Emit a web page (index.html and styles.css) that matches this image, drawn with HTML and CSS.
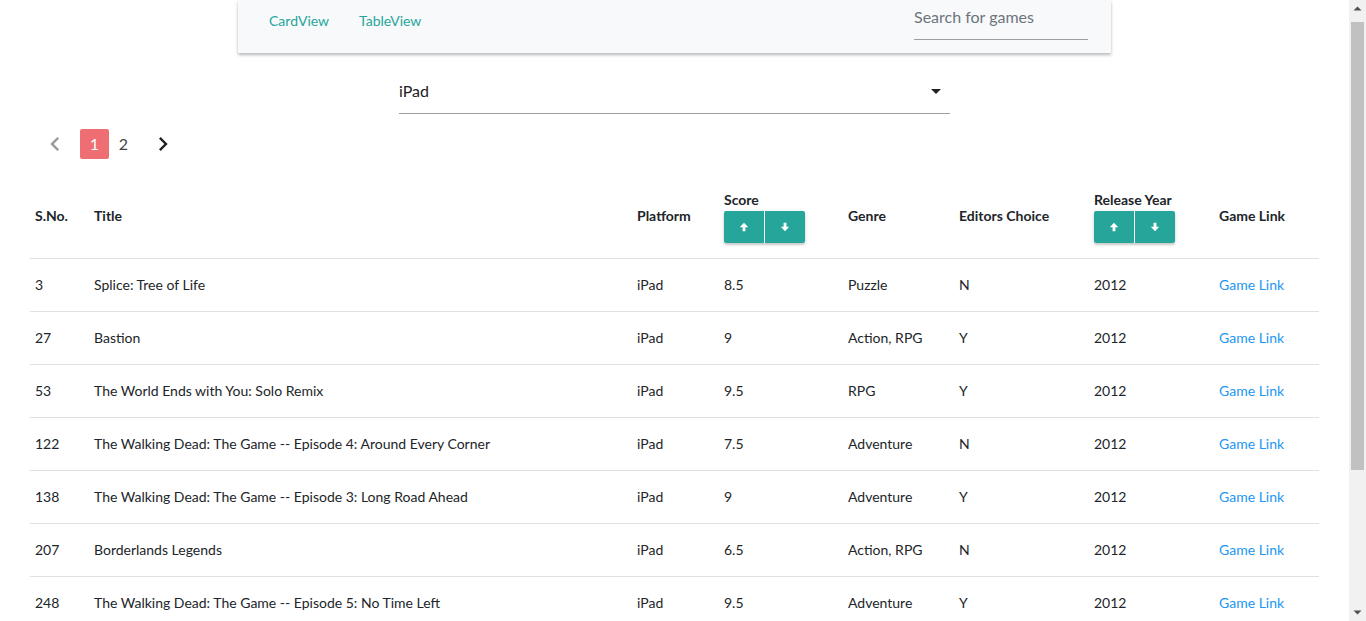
FILE: index.html
```html
<!DOCTYPE html>
<html lang="en">
<head>
<meta charset="utf-8">
<title>Games</title>
<link rel="stylesheet" href="styles.css">
</head>
<body>
<div class="page">
  <nav class="navbar">
    <div class="nav-links">
      <a class="nav-link" href="#">CardView</a>
      <a class="nav-link" href="#">TableView</a>
    </div>
    <div class="search">
      <input class="search-input" type="text" placeholder="Search for games">
    </div>
  </nav>

  <div class="select-wrap">
    <div class="select">
      <span class="select-value">iPad</span>
      <svg class="caret" viewBox="0 0 24 24" width="24" height="24"><path d="M7 10l5 5 5-5z" fill="#212121"/></svg>
    </div>
  </div>

  <ul class="pagination">
    <li class="pg-arrow disabled"><svg viewBox="0 0 24 24" width="28" height="28"><path d="M15.41 7.41L14 6l-6 6 6 6 1.41-1.41L10.83 12z"/></svg></li>
    <li class="pg-num active">1</li>
    <li class="pg-num">2</li>
    <li class="pg-arrow next"><svg viewBox="0 0 24 24" width="28" height="28"><path d="M10 6L8.59 7.41 13.17 12l-4.58 4.59L10 18l6-6z"/></svg></li>
  </ul>

  <table class="games">
    <colgroup>
      <col class="c-sno"><col class="c-title"><col class="c-platform"><col class="c-score"><col class="c-genre"><col class="c-editors"><col class="c-year"><col class="c-link">
    </colgroup>
    <thead>
      <tr>
        <th>S.No.</th>
        <th>Title</th>
        <th>Platform</th>
        <th>
          <div class="th-label">Score</div>
          <div class="sort-group">
            <button class="sort-btn"><svg viewBox="0 0 10 10" width="10" height="10"><path d="M5 0.8L9.2 5.2H6.4V9.2H3.6V5.2H0.8Z"/></svg></button>
            <button class="sort-btn"><svg viewBox="0 0 10 10" width="10" height="10"><path d="M5 9.2L9.2 4.8H6.4V0.8H3.6V4.8H0.8Z"/></svg></button>
          </div>
        </th>
        <th>Genre</th>
        <th>Editors Choice</th>
        <th>
          <div class="th-label">Release Year</div>
          <div class="sort-group">
            <button class="sort-btn"><svg viewBox="0 0 10 10" width="10" height="10"><path d="M5 0.8L9.2 5.2H6.4V9.2H3.6V5.2H0.8Z"/></svg></button>
            <button class="sort-btn"><svg viewBox="0 0 10 10" width="10" height="10"><path d="M5 9.2L9.2 4.8H6.4V0.8H3.6V4.8H0.8Z"/></svg></button>
          </div>
        </th>
        <th>Game Link</th>
      </tr>
    </thead>
    <tbody>
      <tr><td>3</td><td>Splice: Tree of Life</td><td>iPad</td><td>8.5</td><td>Puzzle</td><td>N</td><td>2012</td><td><a class="game-link" href="#">Game Link</a></td></tr>
      <tr><td>27</td><td>Bastion</td><td>iPad</td><td>9</td><td>Action, RPG</td><td>Y</td><td>2012</td><td><a class="game-link" href="#">Game Link</a></td></tr>
      <tr><td>53</td><td>The World Ends with You: Solo Remix</td><td>iPad</td><td>9.5</td><td>RPG</td><td>Y</td><td>2012</td><td><a class="game-link" href="#">Game Link</a></td></tr>
      <tr><td>122</td><td>The Walking Dead: The Game -- Episode 4: Around Every Corner</td><td>iPad</td><td>7.5</td><td>Adventure</td><td>N</td><td>2012</td><td><a class="game-link" href="#">Game Link</a></td></tr>
      <tr><td>138</td><td>The Walking Dead: The Game -- Episode 3: Long Road Ahead</td><td>iPad</td><td>9</td><td>Adventure</td><td>Y</td><td>2012</td><td><a class="game-link" href="#">Game Link</a></td></tr>
      <tr><td>207</td><td>Borderlands Legends</td><td>iPad</td><td>6.5</td><td>Action, RPG</td><td>N</td><td>2012</td><td><a class="game-link" href="#">Game Link</a></td></tr>
      <tr><td>248</td><td>The Walking Dead: The Game -- Episode 5: No Time Left</td><td>iPad</td><td>9.5</td><td>Adventure</td><td>Y</td><td>2012</td><td><a class="game-link" href="#">Game Link</a></td></tr>
    </tbody>
  </table>
</div>
<div class="scrollbar" aria-hidden="true">
  <div class="sb-btn"><svg viewBox="0 0 17 17" width="17" height="17"><path d="M4.5 10.5L8.5 6.5L12.5 10.5Z" fill="#505050"/></svg></div>
  <div class="sb-track"><div class="sb-thumb"></div></div>
  <div class="sb-btn"><svg viewBox="0 0 17 17" width="17" height="17"><path d="M4.5 6.5L8.5 10.5L12.5 6.5Z" fill="#505050"/></svg></div>
</div>
</body>
</html>
```

FILE: styles.css
```css
* { box-sizing: border-box; }
html, body { margin: 0; padding: 0; overflow: hidden; }
body {
  font-family: Lato, "Open Sans", sans-serif;
  font-size: 14px;
  color: #212529;
  background: #fff;
  display: flex;
  height: 100vh;
}
.page {
  flex: 1;
  min-width: 0;
  height: 100vh;
  overflow: hidden;
}
.scrollbar {
  width: 17px;
  flex: none;
  height: 100vh;
  background: #f1f1f1;
  display: flex;
  flex-direction: column;
}
.sb-btn { height: 17px; flex: none; display: block; }
.sb-btn svg { display: block; }
.sb-track {
  flex: 1;
  padding: 5px 2px 0 2px;
}
.sb-thumb {
  height: 448px;
  background: #c1c1c1;
}
.navbar {
  width: 873px;
  height: 53px;
  margin: 0 auto;
  background: #f8f9fa;
  box-shadow: 0 2px 3px rgba(0,0,0,0.28);
  display: flex;
  align-items: flex-start;
  justify-content: space-between;
  padding: 0 23px 0 16px;
}
.nav-links {
  display: flex;
  padding-top: 10px;
}
.nav-link {
  color: #26a69a;
  text-decoration: none;
  padding: 0 15px;
  line-height: 22px;
  font-size: 14px;
}
.search {
  padding-top: 6px;
}
.search-input {
  width: 174px;
  height: 34px;
  border: none;
  border-bottom: 1px solid #9e9e9e;
  background: transparent;
  font-family: inherit;
  font-size: 16px;
  padding: 0 0 12px 0;
  outline: none;
  color: #495057;
}
.search-input::placeholder { color: #6c757d; opacity: 1; }

.select-wrap {
  display: flex;
  justify-content: center;
  margin-top: 15px;
}
.select {
  width: 551px;
  height: 46px;
  border-bottom: 1px solid #9e9e9e;
  display: flex;
  align-items: center;
  justify-content: space-between;
  font-size: 16px;
}
.select-value { color: #212121; }
.caret { margin-right: 2px; }

.pagination {
  list-style: none;
  margin: 15px 0 0 0;
  padding: 0 0 0 40px;
  display: flex;
  align-items: center;
  height: 30px;
}
.pg-arrow {
  width: 30px;
  height: 30px;
  display: flex;
  align-items: center;
  justify-content: center;
}
.pg-arrow.disabled { margin-right: 10px; fill: #999; }
.pg-arrow.next { margin-left: 10px; fill: #212121; }
.pg-num {
  width: 29px;
  height: 30px;
  line-height: 30px;
  text-align: center;
  font-size: 16px;
  border-radius: 2px;
  color: #444;
}
.pg-num.active {
  background: #ee6e73;
  color: #fff;
}

.games {
  width: 1289px;
  margin: 15px 30px 0 30px;
  border-collapse: collapse;
  table-layout: fixed;
}
.c-sno { width: 59px; }
.c-title { width: 543px; }
.c-platform { width: 87px; }
.c-score { width: 124px; }
.c-genre { width: 111px; }
.c-editors { width: 135px; }
.c-year { width: 125px; }
.c-link { width: 105px; }
.games tr { border-bottom: 1px solid rgba(0,0,0,0.12); }
.games th, .games td {
  padding: 15px 5px;
  text-align: left;
  vertical-align: middle;
  line-height: 22px;
}
.games th {
  font-weight: 700;
  font-size: 14px;
}
.th-label { line-height: 22px; }
.sort-group {
  display: inline-flex;
  gap: 1px;
  box-shadow: 0 2px 2px rgba(0,0,0,0.14), 0 1px 5px rgba(0,0,0,0.12);
  border-radius: 2px;
}
.sort-btn {
  width: 40px;
  height: 32px;
  border: none;
  background: #26a69a;
  display: flex;
  align-items: center;
  justify-content: center;
  padding: 0;
  fill: #fff;
}
.sort-btn:first-child { border-radius: 2px 0 0 2px; }
.sort-btn:last-child { border-radius: 0 2px 2px 0; }
.game-link {
  color: #2196f3;
  text-decoration: none;
}
```
